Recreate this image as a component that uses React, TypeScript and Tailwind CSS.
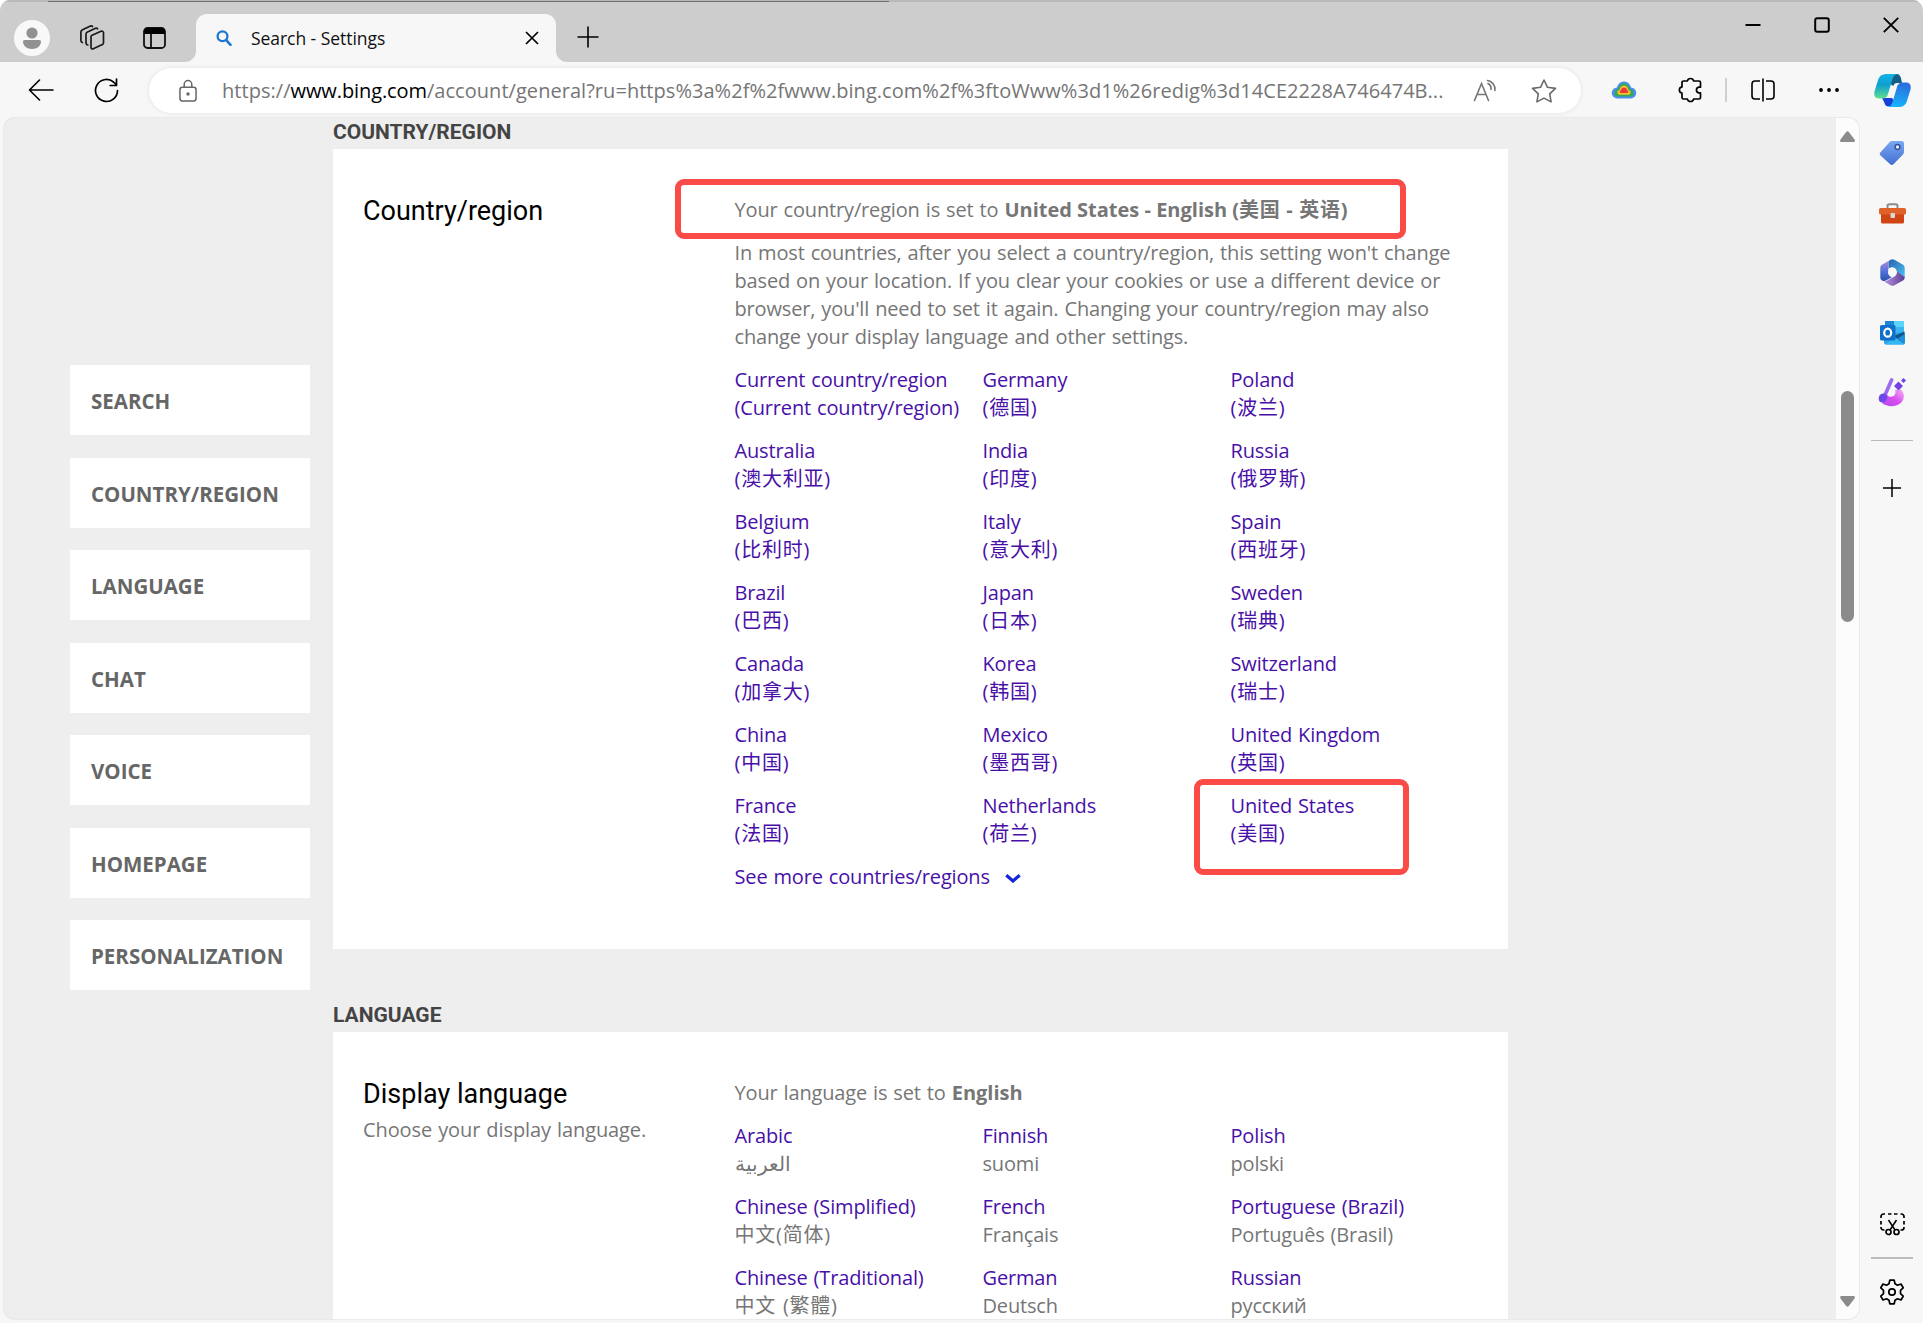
import React from "react";

const countries: [string, string][][] = [
  [["Current country/region", "(Current country/region)"], ["Germany", "(德国)"], ["Poland", "(波兰)"]],
  [["Australia", "(澳大利亚)"], ["India", "(印度)"], ["Russia", "(俄罗斯)"]],
  [["Belgium", "(比利时)"], ["Italy", "(意大利)"], ["Spain", "(西班牙)"]],
  [["Brazil", "(巴西)"], ["Japan", "(日本)"], ["Sweden", "(瑞典)"]],
  [["Canada", "(加拿大)"], ["Korea", "(韩国)"], ["Switzerland", "(瑞士)"]],
  [["China", "(中国)"], ["Mexico", "(墨西哥)"], ["United Kingdom", "(英国)"]],
  [["France", "(法国)"], ["Netherlands", "(荷兰)"], ["United States", "(美国)"]],
];

const languages: [string, string][][] = [
  [["Arabic", "العربية"], ["Finnish", "suomi"], ["Polish", "polski"]],
  [["Chinese (Simplified)", "中文(简体)"], ["French", "Français"], ["Portuguese (Brazil)", "Português (Brasil)"]],
  [["Chinese (Traditional)", "中文 (繁體)"], ["German", "Deutsch"], ["Russian", "русский"]],
];

const nav = ["SEARCH", "COUNTRY/REGION", "LANGUAGE", "CHAT", "VOICE", "HOMEPAGE", "PERSONALIZATION"];

function TitleBar() {
  return (
    <div className="flex h-[62px] shrink-0 flex-col bg-[#cdcdcd]">
      <div className="flex h-[2px] shrink-0 bg-[#b9b9b9]">
        <div className="mt-px ml-[48px] h-px w-[841px] bg-[#6f6f6f]" />
      </div>
      <div className="flex min-h-0 flex-1">
        <div className="flex w-[185px] shrink-0 items-center pt-[12px] pl-[14px]">
          <svg className="h-9 w-9" viewBox="0 0 36 36">
            <circle cx="18" cy="18" r="18" fill="#f8f8f8" />
            <circle cx="18" cy="13" r="5.6" fill="#919191" />
            <path d="M10.5 20h15a1.5 1.5 0 0 1 1.5 1.5C27 26 23 29 18 29s-9-3-9-7.500a1.500 1.500 0 0 1 1.500-1.500z" fill="#919191" />
          </svg>
          <svg className="ml-[29px] h-[26px] w-[26px]" viewBox="0 0 26 26" fill="none" stroke="#1a1a1a" strokeWidth="1.7" strokeLinejoin="round" strokeLinecap="round">
            <path d="M12.500 10.500l9.500-4.200c1.200-.5 2.500.2 2.500 1.500v10c0 .8-.4 1.500-1.200 1.800l-9 4.200c-1.200.5-2.300-.2-2.300-1.500v-10c0-.8.200-1.500.5-1.800z" />
            <path d="M18.500 3.800c-.5-.8-1.200-.8-2-.5L8.500 7C7.500 7.500 7 8.200 7 9.200V18c0 1 .5 1.800 1.800 2" />
            <path d="M13.500 1.500c-.5-.7-1.200-.7-2-.4L3.500 4.800c-1 .5-1.600 1.200-1.600 2.300v8.500c0 1 .4 1.500 1.500 1.900" />
          </svg>
          <svg className="ml-[38px] h-[22px] w-[23px]" viewBox="0 0 23 22" fill="none">
            <rect x="1" y="1" width="21" height="20" rx="3.500" stroke="#111" strokeWidth="1.800" />
            <path d="M1 7V4.500C1 2.500 2.500 1 4.500 1h14C20.500 1 22 2.500 22 4.500V7z" fill="#000" />
            <path d="M8 7v14" stroke="#111" strokeWidth="1.800" />
          </svg>
        </div>
        <div className="flex items-end">
          <svg className="h-[11px] w-[11px]" viewBox="0 0 11 11"><path d="M11 0v11H0C6 11 11 6 11 0z" fill="#f7f7f7" /></svg>
          <div className="flex h-12 w-[360px] items-center rounded-t-[11px] bg-[#f7f7f7] pl-[20px]">
            <svg className="h-4 w-4" viewBox="0 0 16 16" fill="none" stroke="#1a78cf" strokeLinecap="round">
              <circle cx="6.500" cy="6.300" r="4.900" strokeWidth="2.300" />
              <path d="M10.200 10.200l4.300 4.600" strokeWidth="2.600" />
            </svg>
            <span className="ml-[19px] w-[274px] text-[17.500px] tracking-[-0.050px] whitespace-nowrap text-[#111]">Search - Settings</span>
            <svg className="h-[14px] w-[14px]" viewBox="0 0 14 14" stroke="#000" strokeWidth="1.700"><path d="M1 1l12 12M13 1L1 13" /></svg>
          </div>
          <svg className="h-[11px] w-[11px]" viewBox="0 0 11 11"><path d="M0 0v11h11C5 11 0 6 0 0z" fill="#f7f7f7" /></svg>
        </div>
        <svg className="mt-[24px] ml-[10px] h-[22px] w-[22px]" viewBox="0 0 22 22" stroke="#000" strokeWidth="1.600"><path d="M11 .5v21M.5 11h21" /></svg>
        <div className="mt-[15px] mr-[24.500px] ml-auto flex h-4 items-center">
          <svg className="h-4 w-4" viewBox="0 0 16 16" stroke="#000" strokeWidth="2"><path d="M.5 8h15" /></svg>
          <svg className="ml-[53px] h-4 w-4" viewBox="0 0 16 16" fill="none" stroke="#000" strokeWidth="2"><rect x="1.200" y="1.200" width="13.600" height="13.600" rx="2" /></svg>
          <svg className="ml-[53px] h-4 w-4" viewBox="0 0 16 16" stroke="#000" strokeWidth="1.900"><path d="M.8.800l14.400 14.400M15.200.800L.8 15.200" /></svg>
        </div>
      </div>
    </div>
  );
}

function ToolBar() {
  return (
    <div className="flex h-[56px] shrink-0 items-center bg-[#f7f7f7]">
      <svg className="ml-[28px] h-[22px] w-[26px]" viewBox="0 0 26 22" fill="none" stroke="#000" strokeWidth="1.600" strokeLinecap="round" strokeLinejoin="round"><path d="M25 11H1.500M11.500 1L1.500 11l10 10" /></svg>
      <svg className="ml-[40px] h-[25px] w-[25px]" viewBox="0 0 25 25" fill="none" stroke="#000" strokeWidth="1.700" strokeLinecap="round" strokeLinejoin="round"><path d="M23.500 12.500a11 11 0 1 1-4-8.500l3 3M22.500 1.200V7.500h-6.300" /></svg>
      <div className="mt-px ml-[30px] flex h-[45px] w-[1432px] shrink-0 items-center rounded-full bg-white pl-[30px] shadow-[0_0_5px_rgba(0,0,0,0.09)]">
        <svg className="h-6 w-[18px] shrink-0" viewBox="0 0 19 24" fill="none" stroke="#666" strokeWidth="1.600"><rect x="1" y="8" width="17" height="14.500" rx="2.500" /><path d="M5.500 8V5a4 4 0 0 1 8 0v3" /><circle cx="9.500" cy="15.200" r="1" fill="#666" /></svg>
        <span className="ml-[25px] w-[1222px] shrink-0 text-[20px] tracking-[0.045px] whitespace-nowrap text-[#757575]">https://<span className="tracking-[-0.100px] text-black">www.bing.com</span>/account/general?ru=https%3a%2f%2fwww.bing.com%2f%3ftoWww%3d1%26redig%3d14CE2228A746474B...</span>
        <svg className="ml-[29px] h-6 w-6 shrink-0" viewBox="0 0 24 24" fill="none" stroke="#757575" strokeWidth="1.600" strokeLinecap="round"><path d="M1.500 21.500L8.500 4.500l7 17M4 15.500h9" /><path d="M15 4.500a6 6 0 0 1 3 6M14.500 1.500c4.500.5 8 5 7.500 10" /></svg>
        <svg className="ml-[34px] h-[26px] w-[26px] shrink-0" viewBox="0 0 26 26" fill="none" stroke="#6a6a6a" strokeWidth="1.600" strokeLinejoin="round"><path d="M13 2l3.500 7.300 8 1.100-5.800 5.500 1.400 8L13 20.100l-7.100 3.800 1.400-8L1.500 10.400l8-1.100z" /></svg>
      </div>
      <svg className="ml-[30px] h-[18px] w-[26px]" viewBox="0 0 26 18"><path d="M6.500 17.500A5.500 5.500 0 0 1 6 6.500C7 2.500 10 .5 13 .5s6 2 7 6a5.500 5.500 0 0 1-.5 11z" fill="#4d8df0" /><path d="M7 15.500a3.500 3.500 0 0 1 0-7.200C8 4 10.500 2.500 13 2.500s5 1.500 6 5.800a3.500 3.500 0 0 1 0 7.200z" fill="#34a853" /><path d="M8 13.800a2.500 2.500 0 0 1 .5-4.800C9.500 5.500 11 4.500 13 4.500s3.500 1 4.500 4.500a2.500 2.500 0 0 1 .5 4.800z" fill="#fbc02d" /><path d="M9.500 12a1.700 1.700 0 0 1 .5-3c.5-1.800 1.500-2.500 3-2.500s2.500.7 3 2.500a1.700 1.700 0 0 1 .5 3z" fill="#ea3a35" /></svg>
      <svg className="ml-[41px] h-[26px] w-[24px]" viewBox="0 0 24 26" fill="none" stroke="#000" strokeWidth="1.700" strokeLinejoin="round"><path d="M9.300 4a3.300 3.300 0 0 1 6.400 0H21a1.500 1.500 0 0 1 1.500 1.500v4.700h-1.700a2.900 2.900 0 0 0 0 5.700h1.700V20.500A1.500 1.500 0 0 1 21 22h-5.300a3.300 3.300 0 0 1-6.400 0H5.500A1.500 1.500 0 0 1 4 20.500v-4.300a3.200 3.200 0 0 1 0-6.300V5.500A1.500 1.500 0 0 1 5.500 4z" /></svg>
      <div className="ml-[23px] h-6 w-[2px] bg-[#cfcfcf]" />
      <svg className="ml-[23.500px] h-6 w-6" viewBox="0 0 24 24" fill="none" stroke="#000" strokeWidth="1.600"><path d="M9 3H4a3 3 0 0 0-3 3v12a3 3 0 0 0 3 3h5M15 3h5a3 3 0 0 1 3 3v12a3 3 0 0 1-3 3h-5M12 .5v23" /></svg>
      <svg className="ml-[44.500px] h-5 w-5" viewBox="0 0 20 20"><circle cx="2" cy="10" r="1.900" /><circle cx="10" cy="10" r="1.900" /><circle cx="18" cy="10" r="1.900" /></svg>
      <Copilot />
    </div>
  );
}

function Copilot() {
  return (
    <svg className="ml-[34.500px] h-[33px] w-[37px]" viewBox="0 0 37 33">
      <defs>
        <linearGradient id="cpA" x1="0" y1="0" x2="0" y2="1"><stop offset="0" stopColor="#13b3e4" /><stop offset=".45" stopColor="#0f9fd0" /><stop offset="1" stopColor="#5fe08c" /></linearGradient>
        <linearGradient id="cpB" x1=".5" y1="0" x2=".3" y2="1"><stop offset="0" stopColor="#2a6fdc" /><stop offset="1" stopColor="#18b4fb" /></linearGradient>
      </defs>
      <path d="M18 0h4.500c3 0 4 2 4.700 5L28 9h-5c-2 0-3 1-3.700 3L16 10z" fill="#155f86" />
      <path d="M8 24h10l3 4-2 4.500h-4c-3 0-4-1.500-4.700-4z" fill="#1640d8" />
      <path d="M12 0h12c-3 .5-4.500 2-5.500 5l-4.500 15c-.8 3-2.500 4.500-5.500 4.500H5c-4 0-5.500-3-4.500-7L4 6c1.200-4 4-6 8-6z" fill="url(#cpA)" />
      <path d="M25 33H13c3-.5 4.500-2 5.500-5L23 13c.8-3 2.500-4.500 5.500-4.500h3.500c4 0 5.500 3 4.500 7L33 27c-1.200 4-4 6-8 6z" fill="url(#cpB)" />
    </svg>
  );
}

function SideBar() {
  return (
    <div className="flex w-16 shrink-0 flex-col items-center pl-[2px]">
      <svg className="mt-[22px] h-[26px] w-[26px]" viewBox="0 0 26 26">
        <defs><linearGradient id="tg" x1="0" y1="0" x2="0" y2="1"><stop offset="0" stopColor="#7ba8f2" /><stop offset="1" stopColor="#426fd0" /></linearGradient></defs>
        <path d="M13 1h9.500A2.500 2.500 0 0 1 25 3.500V12c0 1-.3 1.700-1 2.400l-9.500 9.800c-1 1-2.300 1-3.300 0L1.500 15.500c-1-1-1-2.300 0-3.300l9-10c.7-.8 1.500-1.200 2.500-1.200z" fill="url(#tg)" />
        <circle cx="18.500" cy="7" r="2.400" fill="#e6eefc" stroke="#34539c" strokeWidth="1.500" />
      </svg>
      <svg className="mt-[37px] h-[21px] w-[27px]" viewBox="0 0 27 21">
        <path d="M8.500 6V3c0-1 .7-1.700 1.700-1.700h6.600c1 0 1.700.7 1.700 1.700v3" fill="none" stroke="#8c8c8c" strokeWidth="2" />
        <path d="M2 9h23v10a1.500 1.500 0 0 1-1.500 1.500h-20A1.500 1.500 0 0 1 2 19z" fill="#cf4514" />
        <rect y="5" width="27" height="6.500" rx="1.500" fill="#e0622b" />
        <rect x="11.500" y="10" width="4.500" height="5" rx="1" fill="#d8d8d8" />
      </svg>
      <svg className="mt-[35px] h-[27px] w-[25px]" viewBox="0 0 25 27">
        <defs>
          <linearGradient id="ma" x1="0" y1="0" x2="0" y2="1"><stop offset="0" stopColor="#b58ae0" /><stop offset=".6" stopColor="#4a6fd6" /><stop offset="1" stopColor="#2d4fae" /></linearGradient>
          <linearGradient id="mb" x1="0" y1="0" x2="1" y2="1"><stop offset="0" stopColor="#2b5fae" /><stop offset="1" stopColor="#49c3f4" /></linearGradient>
          <linearGradient id="mc" x1="0" y1="0" x2="1" y2="0"><stop offset="0" stopColor="#c39bea" /><stop offset="1" stopColor="#5c3c93" /></linearGradient>
        </defs>
        <path d="M2 21.500l8.500 4.800c1.300.7 2.700.7 4 0l8.500-4.800c1-.7 1.700-1.800 1.700-3.100 0-1-.5-2-1.500-2.600l-6.500-4c.2 3-.8 5-3 6.200l-8 4.200c-1.200.5-2.500.3-3.700-.7z" fill="url(#mc)" />
        <path d="M10.500.8L2 5.700C.8 6.500.3 7.500.3 8.800v9.700c0 2.800 3 4.500 5.500 3l6-3.200c-2.300-.8-3.500-2.300-3.500-4.800V3.500c0-1 1-2 2.200-2.700z" fill="url(#ma)" />
        <path d="M10.500.8c1.300-.8 2.700-.8 4 0L23 5.700c1 .7 1.700 1.800 1.700 3.100v9.500L16.500 12c-.4-2.200-2-3.700-4.200-3.700-1.500 0-2.500.5-3.800 1.500V3.500c0-1 .8-2 2-2.700z" fill="url(#mb)" />
        <circle cx="12.500" cy="13.300" r="4.300" fill="#f7f7f7" />
      </svg>
      <svg className="mt-[34px] h-[25px] w-[25px]" viewBox="0 0 25 25">
        <rect x="5" y="1" width="19" height="15" rx="1.500" fill="#3fb5ee" /><rect x="14" y="1" width="10" height="6" fill="#5bd3fb" /><rect x="5" y="1" width="9" height="8" fill="#1a86d6" />
        <path d="M4 14l20.500-2v11a1.500 1.500 0 0 1-1.500 1.500H6a2 2 0 0 1-2-2z" fill="#2aa4e8" /><path d="M24.500 11.500v12L12 17z" fill="#0f548c" /><path d="M5 24.500L15 17l9.500 7.500z" fill="#35b8f1" /><path d="M24.700 14v10L17.500 18.500z" fill="#1c8fdc" />
        <rect y="5" width="15.500" height="15.500" rx="1.500" fill="#0f6fc9" />
        <ellipse cx="7.700" cy="12.700" rx="3.500" ry="4" fill="none" stroke="#fff" strokeWidth="2.200" />
      </svg>
      <svg className="mt-[32px] h-[30px] w-[28px]" viewBox="0 0 28 30">
        <defs><linearGradient id="dg" x1="0" y1="1" x2="1" y2="0"><stop offset="0" stopColor="#b04bf0" /><stop offset=".5" stopColor="#d94df0" /><stop offset="1" stopColor="#f3b5f3" /></linearGradient></defs>
        <path d="M23 12.500c4 4 3.500 9.500.3 13C19 30 9.500 30.500 4 26l5-8.500c1.500 3 5.500 3 7.500.5 1.300-1.800 1.300-3.500.3-5z" fill="url(#dg)" />
        <path d="M13.700 2.800L7 18" stroke="#9a6cf0" strokeWidth="3.600" strokeLinecap="round" />
        <path d="M5 16.500c3-.5 5 2 4 5C8 25 4.500 26.500 1.500 24.500-.5 20.500 1.500 17 5 16.500z" fill="#6d4ae8" />
        <path d="M20.500 4.500l4.500 4.500-4.500 4.500L16 9zM25.500 1L28 3.500 25.500 6 23 3.500z" fill="#7442e4" />
      </svg>
      <div className="mt-[33px] h-px w-[42px] bg-[#b8b8b8]" />
      <svg className="mt-[38px] h-[18px] w-[18px]" viewBox="0 0 18 18" stroke="#000" strokeWidth="1.500"><path d="M9 0v18M0 9h18" /></svg>
      <svg className="mt-auto h-[23px] w-[25px]" viewBox="0 0 25 23" fill="none" stroke="#000" strokeWidth="1.700">
        <path d="M1 5V3.500A2.500 2.500 0 0 1 3.500 1H5M8 1h3.500M14 1h3.500M20.500 1h1A2.500 2.500 0 0 1 24 3.500V5M24 8v3.500M24 14v.5A2.500 2.500 0 0 1 21.500 17h-1M1 8v3.500M1 14v.5A2.500 2.500 0 0 0 3.500 17h1" />
        <path d="M8.500 7l6.500 10M16.500 7L10 17" strokeWidth="1.500" /><circle cx="8.500" cy="19" r="2.500" /><circle cx="16.500" cy="19" r="2.500" />
      </svg>
      <div className="mt-[21px] h-[2px] w-[42px] bg-[#bcbcbc]" />
      <svg className="mt-[20px] mb-[18px] h-[26px] w-[26px]" viewBox="0 0 26 26" fill="none" stroke="#000" strokeWidth="1.700" strokeLinejoin="round">
        <path d="M10.800 1.200h4.400l.8 3.600 2.500 1.400 3.500-1.200 2.200 3.800-2.700 2.600v3.200l2.700 2.600-2.200 3.800-3.500-1.200-2.500 1.400-.8 3.600h-4.400l-.8-3.600-2.500-1.400L4 21l-2.200-3.800 2.700-2.600v-3.200L1.800 8.800 4 5l3.500 1.200L10 4.800z" /><circle cx="13" cy="13" r="3.200" />
      </svg>
    </div>
  );
}

const isHan = (s: string) => /[\u4e00-\u9fff]/.test(s);

function Grid({ rows, native }: { rows: [string, string][][]; native: "link" | "plain" }) {
  return (
    <div className="grid w-[744px] grid-cols-3 gap-y-[15px]">
      {rows.flat().map(([name, local]) => (
        <div key={name} className="whitespace-nowrap text-[#4810a8]">
          <div className="h-7">{name}</div>
          <div className={native === "link" ? "h-7" : "h-7 text-[#767676]"}>
            <span className={isHan(local) ? "tracking-[0.750px]" : ""}>{local}</span>
          </div>
        </div>
      ))}
    </div>
  );
}

export default function App() {
  return (
    <div className="flex h-[1323px] w-[1923px] flex-col overflow-hidden rounded-t-[10px] bg-[#f7f7f7] font-['Open_Sans','Noto_Sans_CJK_SC',sans-serif]">
      <TitleBar />
      <ToolBar />
      <div className="flex min-h-0 flex-1">
        <div className="mb-1 ml-1 flex w-[1855px] shrink-0 overflow-hidden rounded-[11px] bg-[#eeeeee] shadow-[0_0_2px_rgba(0,0,0,0.2)]">
          <nav className="mt-[247px] ml-[66px] flex w-60 shrink-0 flex-col gap-[22.500px]">
            {nav.map((n) => (
              <div key={n} className="flex h-[70px] shrink-0 items-center bg-white pt-[3px] pl-[21px] text-[20.500px] font-bold tracking-normal text-[#666]">{n}</div>
            ))}
          </nav>
          <main className="ml-[23px] w-[1175px] shrink-0 text-[20px] leading-7 tracking-[-0.160px] text-[#767676] [word-spacing:1px]">
            <h2 className="h-[31px] pt-px font-['Roboto',sans-serif] text-[21px] leading-[26px] font-bold tracking-normal text-[#444]">COUNTRY/REGION</h2>
            <section className="flex h-[800px] bg-white pt-[46px] pl-[30px]">
              <h3 className="w-[371.500px] shrink-0 font-['Roboto',sans-serif] text-[27px] leading-[32px] tracking-normal text-black">Country/region</h3>
              <div className="mt-px">
                <div className="relative mb-[15px] h-7">
                  Your country/region is set to <b className="tracking-normal [word-spacing:0]">United States - English (<span className="tracking-[0.700px]">美国 - 英语)</span></b>
                  <div className="absolute -top-[17px] -left-[60px] h-[60px] w-[731px] rounded-[9px] border-[6px] border-[#fa4b47]" />
                </div>
                <p className="mb-[15px] whitespace-nowrap">
                  In most countries, after you select a country/region, this setting won't change<br />
                  based on your location. If you clear your cookies or use a different device or<br />
                  browser, you'll need to set it again. Changing your country/region may also<br />
                  change your display language and other settings.
                </p>
                <div className="relative">
                  <Grid rows={countries} native="link" />
                  <div className="absolute -bottom-[27px] left-[459px] h-[96px] w-[215px] rounded-[9px] border-[6px] border-[#fa4b47]" />
                </div>
                <div className="mt-[15px] flex h-7 items-center text-[#4810a8]">
                  See more countries/regions
                  <svg className="mt-[3px] ml-[15px] h-[9px] w-[16px]" viewBox="0 0 16 9" fill="none" stroke="#1426d8" strokeWidth="3.200"><path d="M1.300 1.200L8 7l6.700-5.800" /></svg>
                </div>
              </div>
            </section>
            <h2 className="h-[83px] pt-[53px] font-['Roboto',sans-serif] text-[21px] leading-[26px] font-bold tracking-normal text-[#444]">LANGUAGE</h2>
            <section className="flex h-[300px] bg-white pt-[46px] pl-[30px]">
              <div className="w-[371.500px] shrink-0">
                <h3 className="font-['Roboto',sans-serif] text-[27px] leading-[32px] tracking-normal text-black [word-spacing:0]">Display language</h3>
                <div className="mt-[6px] tracking-[-0.100px]">Choose your display language.</div>
              </div>
              <div className="mt-px">
                <div className="mb-[15px] h-7">Your language is set to <b className="tracking-normal">English</b></div>
                <Grid rows={languages} native="plain" />
              </div>
            </section>
          </main>
          <div className="ml-auto flex w-[23px] shrink-0 flex-col items-center bg-[#fcfcfc]">
            <svg className="mt-[13px] h-[11px] w-[15px]" viewBox="0 0 15 11"><path d="M6.200 1c.7-1 1.900-1 2.600 0l5.700 7.500c.8 1.200.3 2.500-1 2.500h-12C.2 11-.3 9.700.5 8.500z" fill="#8b8b8b" /></svg>
            <div className="mt-[249px] h-[231px] w-[13px] rounded-full bg-[#8b8b8b]" />
            <svg className="mt-auto mb-[12px] h-[11px] w-[15px]" viewBox="0 0 15 11"><path d="M6.200 10c.7 1 1.900 1 2.600 0l5.700-7.500c.8-1.200.3-2.500-1-2.500h-12C.2 0-.3 1.300.5 2.500z" fill="#8b8b8b" /></svg>
          </div>
        </div>
        <SideBar />
      </div>
    </div>
  );
}
